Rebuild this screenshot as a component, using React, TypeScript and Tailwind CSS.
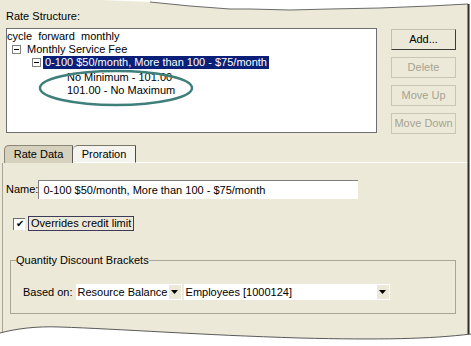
import React from "react";

const FONT = "font-['Liberation_Sans',Arial,sans-serif]";

function MinusBox() {
  return (
    <span className="flex h-[9px] w-[9px] items-center justify-center border border-[#7f7f7f] bg-white">
      <span className="h-px w-[5px] bg-black" />
    </span>
  );
}

function Arrow() {
  return (
    <svg width="7" height="4" viewBox="0 0 7 4">
      <polygon points="0,0 7,0 3.5,4" fill="#000" />
    </svg>
  );
}

function Combo({ label, width }: { label: string; width: string }) {
  return (
    <div className={`flex h-[16px] items-stretch bg-white ${width}`}>
      <span className="flex-1 pl-[2px] leading-[16px] whitespace-nowrap">{label}</span>
      <span className="flex w-[14px] items-center justify-center border border-white bg-[#ece9d8]">
        <Arrow />
      </span>
    </div>
  );
}

const buttons = [
  { label: "Add...", enabled: true },
  { label: "Delete", enabled: false },
  { label: "Move Up", enabled: false },
  { label: "Move Down", enabled: false },
];

export default function App() {
  return (
    <div
      className={`relative flex h-[346px] w-[471px] flex-col overflow-hidden bg-[#ece9d8] pl-[6px] pt-[10px] text-[11px] leading-[13px] text-black ${FONT}`}
    >
      <div className="h-[13px]">Rate Structure:</div>

      <div className="mt-[5px] flex items-start">
        <div className="relative h-[105px] w-[371px] border border-[#6f6f6f] bg-white pt-[1px]">
          <div className="h-[13px] whitespace-pre">cycle  forward  monthly</div>
          <div className="flex h-[13px] items-center pl-[5px]">
            <MinusBox />
            <span className="ml-[6px]">Monthly Service Fee</span>
          </div>
          <div className="flex h-[13px] items-center pl-[25px]">
            <MinusBox />
            <span className="ml-[2px] h-[13px] bg-[#0a1f78] px-[2px] text-white whitespace-nowrap">
              0-100 $50/month, More than 100 - $75/month
            </span>
          </div>
          <div className="mt-[2px] h-[13px] pl-[60px]">No Minimum - 101.00</div>
          <div className="h-[13px] pl-[60px]">101.00 - No Maximum</div>
          <svg
            className="pointer-events-none absolute left-0 top-0"
            width="371"
            height="105"
          >
            <ellipse cx="109" cy="59" rx="76" ry="17" fill="none" stroke="#3f7f7a" strokeWidth="2.5" />
          </svg>
        </div>

        <div className="ml-[14px] mt-[1px] flex flex-col gap-[7px]">
          {buttons.map((b) => (
            <div
              key={b.label}
              className={
                b.enabled
                  ? "flex h-[21px] w-[65px] items-center justify-center border border-b-[#3c3c3c] border-l-[#c4c0b0] border-r-[#3c3c3c] border-t-[#c4c0b0]"
                  : "flex h-[21px] w-[65px] items-center justify-center border border-[#c9c6b6] text-[#a6a393]"
              }
            >
              {b.label}
            </div>
          ))}
        </div>
      </div>

      <div className="-ml-[2px] mt-[11px] flex h-[18px] items-end">
        <div className="flex h-[18px] w-[69px] items-center justify-center rounded-tl-[5px] border-l border-r border-t border-l-[#8a8778] border-r-[#5a5a5a] border-t-[#8a8778] bg-[#d6d1bd]">
          Rate Data
        </div>
        <div className="flex h-[18px] w-[63px] items-center justify-center rounded-tl-[5px] border-b border-r border-t border-b-white border-r-[#4a4a4a] border-t-[#7a7768] bg-[#f4f3ee]">
          Proration
        </div>
        <div className="h-full flex-1 border-b border-white" />
      </div>

      <div className="-ml-[4px] flex w-[466px] flex-1 flex-col border-l border-[#a8a596] pl-[3px] pt-[17px]">
        <div className="flex items-center">
          <span>Name:</span>
          <div className="flex h-[19px] w-[320px] items-center border-l border-t border-[#7f7f7f] bg-white pl-[4px] whitespace-nowrap">
            0-100 $50/month, More than 100 - $75/month
          </div>
        </div>

        <div className="mt-[17px] flex items-center">
          <span className="ml-[7px] flex h-[12px] w-[12px] items-center justify-center border-l border-t border-[#6f6f6f] bg-white text-[10px] leading-none">
            ✔
          </span>
          <span className="ml-[3px] h-[15px] border border-[#3c3c5a] px-[2px] leading-[13px]">
            Overrides credit limit
          </span>
        </div>

        <fieldset className="ml-[4px] mt-[23px] w-[446px] border border-[#a9a697] pb-[13px] pl-[12px] pt-[17px]">
          <legend className="-ml-[7px] px-0 leading-[13px]">Quantity Discount Brackets</legend>
          <div className="flex items-center">
            <span>Based on:</span>
            <Combo label="Resource Balance" width="ml-[3px] w-[106px]" />
            <Combo label="Employees [1000124]" width="ml-[2px] w-[206px]" />
          </div>
        </fieldset>
      </div>

      <svg className="pointer-events-none absolute left-0 top-0" width="471" height="346">
        <path
          d="M0,0 L471,0 L471,3 L468,4 L430,6 L380,8 L330,9 L290,10 L250,9 L230,9 L190,6 L150,2 L100,0 Z"
          fill="#fff"
        />
        <path
          d="M468,4 L430,6 L380,8 L330,9 L290,10 L250,9 L230,9 L190,6 L150,2"
          fill="none"
          stroke="#6a6a6a"
          strokeWidth="1"
        />
        <rect x="469.5" y="0" width="2" height="346" fill="#fff" />
        <line x1="468.5" y1="4" x2="468.5" y2="336" stroke="#2e2e2e" strokeWidth="2" />
        <path
          d="M0,333 C15,329 35,326 60,327 C120,329 200,335 300,338 C380,340 430,339 471,334 L471,346 L0,346 Z"
          fill="#fff"
        />
        <path
          d="M0,333 C15,329 35,326 60,327 C120,329 200,335 300,338 C380,340 430,339 471,334"
          fill="none"
          stroke="#5a5a5a"
          strokeWidth="1"
        />
      </svg>
    </div>
  );
}
